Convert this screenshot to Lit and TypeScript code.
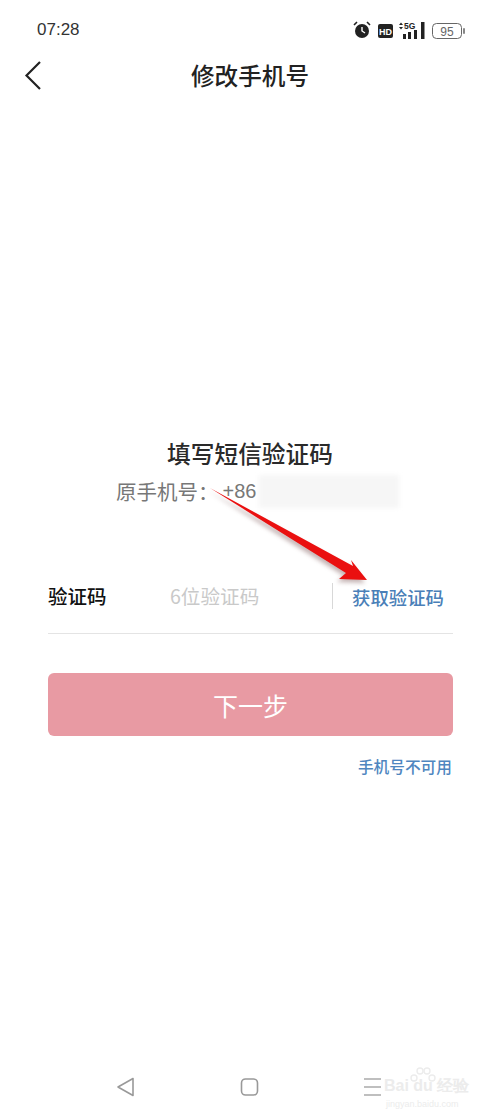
import { LitElement, html, css } from "lit";
import { customElement } from "lit/decorators.js";

@customElement("app-root")
export class AppRoot extends LitElement {
	static styles = css`
		:host {
			display: block;
			position: relative;
			width: 500px;
			height: 1118px;
			overflow: hidden;
			background: #fff;
			color: #222;
			font-family: "Noto Sans CJK SC", "Liberation Sans", sans-serif;
		}

		.status {
			display: flex;
			align-items: center;
			justify-content: space-between;
			height: 20px;
			padding: 20px 37px 0;
		}

		.time {
			font-family: "Liberation Sans", sans-serif;
			font-size: 17px;
			color: #333;
		}

		.status-icons {
			display: block;
			margin-right: -7px;
		}

		.nav {
			display: flex;
			align-items: center;
			justify-content: center;
			position: relative;
			height: 46px;
			margin-top: 12px;
		}

		.back {
			position: absolute;
			left: 24px;
			top: 8px;
		}

		.title {
			font-size: 23.6px;
			font-weight: 500;
			line-height: 46px;
		}

		.intro {
			margin-top: 337px;
			display: flex;
			flex-direction: column;
			align-items: center;
		}

		.heading {
			font-size: 23.7px;
			font-weight: 500;
			line-height: 36px;
			color: #2a2a2a;
		}

		.origin {
			display: flex;
			align-items: center;
			align-self: flex-start;
			margin-left: 116px;
			height: 36px;
			font-size: 20.5px;
			color: #777;
			margin-top: 2px;
		}

		.code {
			font-family: "Liberation Sans", sans-serif;
			font-size: 20px;
			margin-left: 4px;
		}

		.blur {
			width: 140px;
			height: 33px;
			margin-left: 3px;
			background: #f6f6f6;
			filter: blur(2px);
		}

		.form {
			margin: 53px 47px 0 48px;
		}

		.row {
			display: flex;
			align-items: center;
			height: 72px;
			border-bottom: 1px solid #e4e4e4;
			padding-bottom: 4px;
			box-sizing: border-box;
		}

		.label {
			width: 122px;
			font-size: 19.5px;
			font-weight: 500;
			color: #111;
		}

		.placeholder {
			flex: 1;
			font-size: 19.6px;
			color: #c9c9c9;
		}

		.send {
			border-left: 1px solid #d8d8d8;
			padding-left: 19px;
			height: 26px;
			line-height: 28px;
			font-size: 18.4px;
			font-weight: 500;
			color: #4a7fb8;
			margin-right: 9px;
		}

		.next {
			display: flex;
			align-items: center;
			justify-content: center;
			height: 63px;
			margin-top: 39px;
			border-radius: 6px;
			background: #e89aa3;
			color: #fff;
			font-size: 25px;
		}

		.help {
			margin-top: 19px;
			margin-right: 1px;
			text-align: right;
			font-size: 15.7px;
			font-weight: 500;
			line-height: 23px;
			color: #4f86c0;
		}

		.bottom {
			position: absolute;
			left: 0;
			bottom: 17px;
			display: flex;
			width: 100%;
			justify-content: center;
		}

		/* annotation drawn over the screenshot */
		.arrow {
			position: absolute;
			left: 0;
			top: 0;
			pointer-events: none;
			filter: drop-shadow(-2px 3px 2px rgba(90, 40, 40, 0.35));
		}

		.mark {
			position: absolute;
			left: 384px;
			top: 1078px;
			width: 90px;
			font-family: "Liberation Sans", sans-serif;
			color: #ececec;
			line-height: 1;
		}

		.paw {
			position: absolute;
			left: 26px;
			top: -11px;
		}

		.mark-main {
			font-size: 16px;
			font-weight: 700;
		}

		.mark-sub {
			font-size: 9px;
			margin-top: 6px;
			margin-left: 2px;
		}
	`;

	render() {
		return html`
			<div class="status">
				<span class="time">07:28</span>
				<svg class="status-icons" width="118" height="22" viewBox="0 0 118 22">
					<circle cx="10" cy="12" r="7" fill="#222" />
					<path d="M10 8v4l3 2" stroke="#fff" stroke-width="1.4" fill="none" />
					<path d="M2 6l3-3M18 6l-3-3" stroke="#222" stroke-width="1.6" />
					<rect x="26" y="5" width="15" height="14" rx="2" fill="#222" />
					<text x="33.5" y="15.5" text-anchor="middle" font-family="Liberation Sans" font-size="9" font-weight="700" fill="#fff">HD</text>
					<path d="M47 6l2-2.5L51 6zM47 8l2 2.5L51 8z" fill="#222" />
					<text x="52" y="10" font-family="Liberation Sans" font-size="8.5" font-weight="700" fill="#222">5G</text>
					<rect x="51" y="15" width="3" height="5" fill="#222" />
					<rect x="56" y="13" width="3" height="7" fill="#222" />
					<rect x="62" y="11" width="3" height="9" fill="#222" />
					<rect x="69" y="3" width="3.5" height="17" fill="#222" />
					<rect x="80.5" y="4.5" width="29" height="15" rx="4" fill="#fff" stroke="#666" />
					<text x="95" y="17" text-anchor="middle" font-family="Liberation Sans" font-size="12" fill="#666">95</text>
					<rect x="111" y="9" width="2" height="6" rx="1" fill="#888" />
				</svg>
			</div>
			<div class="nav">
				<svg class="back" width="20" height="30" viewBox="0 0 20 30">
					<path d="M16 2L2.5 15.5 16 29" fill="none" stroke="#222" stroke-width="2.2" />
				</svg>
				<span class="title">修改手机号</span>
			</div>
			<div class="intro">
				<div class="heading">填写短信验证码</div>
				<div class="origin">
					<span>原手机号：</span>
					<span class="code">+86</span>
					<span class="blur"></span>
				</div>
			</div>
			<div class="form">
				<div class="row">
					<span class="label">验证码</span>
					<span class="placeholder">6位验证码</span>
					<span class="send">获取验证码</span>
				</div>
				<div class="next">下一步</div>
				<div class="help">手机号不可用</div>
			</div>
			<div class="bottom">
				<svg width="500" height="30" viewBox="0 0 500 30">
					<path d="M133 7.5v17L118 16z" fill="none" stroke="#999" stroke-width="1.6" stroke-linejoin="round" />
					<rect x="241.5" y="8" width="16" height="16" rx="4" fill="none" stroke="#999" stroke-width="1.6" />
					<path d="M364 8h17M364 16h17M364 24h17" stroke="#aaa" stroke-width="1.6" />
				</svg>
			</div>
			<div class="mark">
				<svg class="paw" width="26" height="20" viewBox="0 0 26 20">
					<g fill="none" stroke="#ececec" stroke-width="1.4">
						<circle cx="4" cy="11" r="3" />
						<circle cx="10" cy="4" r="3" />
						<circle cx="17" cy="4" r="3" />
						<circle cx="22" cy="11" r="3" />
					</g>
				</svg>
				<div class="mark-main">Bai du 经验</div>
				<div class="mark-sub">jingyan.baidu.com</div>
			</div>
			<svg class="arrow" width="500" height="1118" viewBox="0 0 500 1118">
				<path d="M210 488L353 566 351 560 367 580 339 579 346 573z" fill="#ea1010" />
			</svg>
		`;
	}
}
